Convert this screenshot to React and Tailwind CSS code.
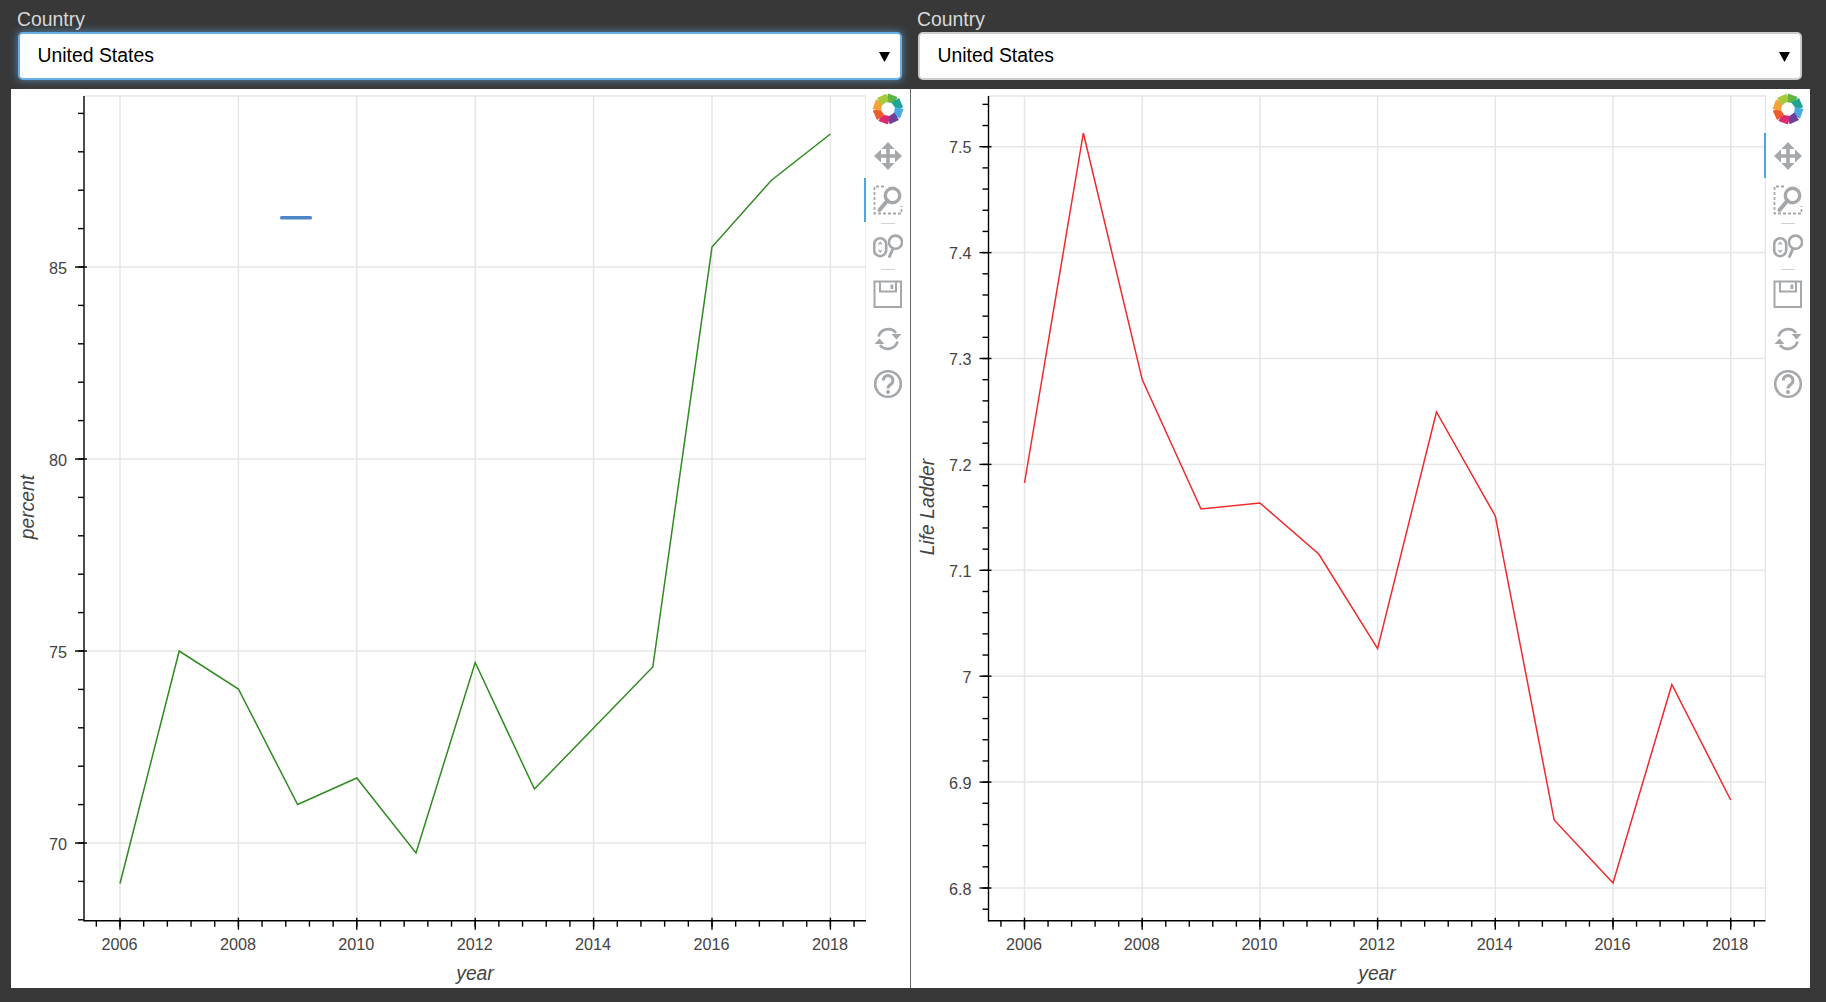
const LOGO_COLORS = ["#5cb545", "#1fa593", "#49a9e0", "#6f3f9c", "#d92a72", "#ee5b2e", "#f5a23a", "#a9c93c"];

const percentSeries = [883.5, 651, 689, 804.5, 778, 853, 662.5, 789, 728, 667, 247, 180.5, 134];
const ladderSeries = [483, 133, 379.6, 509, 503, 554, 648.6, 412, 516, 820, 883, 684.5, 800];

const range = (start, step, stop) => {
  const out = [];
  for (let v = start; step > 0 ? v <= stop : v >= stop; v += step) out.push(v);
  return out;
};

const percentChart = {
  left: 11,
  width: 855,
  axisX: 84,
  rightX: 866,
  year0: 120,
  yearStep: 59.2,
  line: percentSeries,
  color: "#2f8a20",
  label: "percent",
  labelX: 34,
  yTicks: [
    { y: 267, text: "85" },
    { y: 459, text: "80" },
    { y: 651, text: "75" },
    { y: 843, text: "70" },
  ],
  yMinor: range(843 + 76.8, -38.4, 96),
};

const ladderChart = {
  left: 911,
  width: 855,
  axisX: 988.5,
  rightX: 1765.5,
  year0: 1024.5,
  yearStep: 58.85,
  line: ladderSeries,
  color: "#ee2a2a",
  label: "Life Ladder",
  labelX: 934,
  yTicks: [
    { y: 146.7, text: "7.5" },
    { y: 252.6, text: "7.4" },
    { y: 358.5, text: "7.3" },
    { y: 464.4, text: "7.2" },
    { y: 570.3, text: "7.1" },
    { y: 676.2, text: "7" },
    { y: 782.1, text: "6.9" },
    { y: 888, text: "6.8" },
  ],
  yMinor: range(909.2, -21.18, 96),
};

const Chart = ({ config, children }) => {
  const { left, width, axisX, rightX, year0, yearStep, line, color, label, labelX, yTicks, yMinor } = config;
  const top = 89;
  const frameTop = 96;
  const bottom = 920.7;
  const yearX = (i) => year0 + i * yearStep;
  const points = line.map((y, i) => `${yearX(i)},${y}`).join(" ");
  const majorYears = [0, 2, 4, 6, 8, 10, 12];
  const minorX = range(-0.4, 0.4, 12.45).map(yearX);

  return (
    <svg
      width={width}
      height={899}
      viewBox={`${left} ${top} ${width} 899`}
      className="block shrink-0 font-['Liberation_Sans',sans-serif]"
    >
      {/* grid and outline */}
      <g stroke="#e6e6e6" strokeWidth="1.5" fill="none">
        {yTicks.map((t) => (
          <line key={t.text} x1={axisX} x2={rightX} y1={t.y} y2={t.y} />
        ))}
        {majorYears.map((i) => (
          <line key={i} x1={yearX(i)} x2={yearX(i)} y1={frameTop} y2={bottom} />
        ))}
        <path d={`M${axisX} ${frameTop} H${rightX} V${bottom}`} />
      </g>

      <polyline points={points} fill="none" stroke={color} strokeWidth="1.5" />
      {children}

      {/* axes */}
      <g stroke="#000" strokeWidth="1.4">
        <line x1={axisX} x2={axisX} y1={frameTop} y2={bottom + 0.7} />
        <line x1={axisX} x2={rightX} y1={bottom} y2={bottom} />
        {yTicks.map((t) => (
          <line key={t.text} x1={axisX - 9} x2={axisX + 3} y1={t.y} y2={t.y} />
        ))}
        {yMinor.map((y) => (
          <line key={y} x1={axisX - 6} x2={axisX} y1={y} y2={y} />
        ))}
        {majorYears.map((i) => (
          <line key={i} x1={yearX(i)} x2={yearX(i)} y1={bottom - 3} y2={bottom + 9} />
        ))}
        {minorX.map((x) => (
          <line key={x} x1={x} x2={x} y1={bottom} y2={bottom + 6} />
        ))}
      </g>

      {/* labels */}
      <g fill="#444444" fontSize="16.2">
        {yTicks.map((t) => (
          <text key={t.text} x={axisX - 17} y={t.y + 6.5} textAnchor="end">
            {t.text}
          </text>
        ))}
        {majorYears.map((i) => (
          <text key={i} x={yearX(i) - 0.5} y={950} textAnchor="middle">
            {2006 + i}
          </text>
        ))}
      </g>
      <g fill="#444444" fontSize="19.3" fontStyle="italic">
        <text x={(axisX + rightX) / 2} y={980} textAnchor="middle">
          year
        </text>
        <text
          x={labelX}
          y={507}
          textAnchor="middle"
          transform={`rotate(-90 ${labelX} 507)`}
        >
          {label}
        </text>
      </g>
    </svg>
  );
};

const Icon = ({ children }) => (
  <svg width="30" height="30" viewBox="0 0 30 30" className="block" fill="none" stroke="#a5a8ab">
    {children}
  </svg>
);

const LogoIcon = () => (
  <svg width="32" height="32" viewBox="0 0 32 32" className="block">
    {LOGO_COLORS.map((c, i) => (
      <path
        key={c}
        d="M16 0.5 L25.5 4 L22.5 10.5 L14 9 Z"
        fill={c}
        transform={`rotate(${i * 45} 16 16)`}
      />
    ))}
  </svg>
);

const MoveIcon = () => (
  <Icon>
    <path d="M15 6V24M6 15H24" strokeWidth="3.6" />
    <path d="M15 1L21.5 8H8.5ZM15 29L8.5 22H21.5ZM1 15L8 8.5V21.5ZM29 15L22 21.5V8.5Z" fill="#a5a8ab" stroke="none" />
  </Icon>
);

const BoxZoomIcon = () => (
  <Icon>
    <path d="M11 1.5H1.5V28.5H28.5V21" strokeWidth="1.8" strokeDasharray="3 2" />
    <circle cx="19.5" cy="10.5" r="7.2" strokeWidth="3.4" />
    <path d="M14.5 15.5L6.5 25" strokeWidth="4" strokeLinecap="round" />
  </Icon>
);

const WheelZoomIcon = () => (
  <Icon>
    <rect x="1.2" y="7.2" width="12" height="18" rx="6" strokeWidth="2.6" />
    <path d="M5.5 13.5L7.2 11.5L8.9 13.5M5.5 19L7.2 21L8.9 19" strokeWidth="1.2" />
    <circle cx="22.5" cy="11.2" r="6.6" strokeWidth="2.6" />
    <path d="M20 17.5L16.5 25.5" strokeWidth="3" strokeLinecap="round" />
  </Icon>
);

const SaveIcon = () => (
  <Icon>
    <rect x="1.5" y="2.5" width="26.5" height="25.5" strokeWidth="2" />
    <path d="M7 2.5V12.5H23V2.5" strokeWidth="2" />
    <rect x="17.5" y="5.5" width="2.8" height="4.5" fill="#a5a8ab" stroke="none" />
  </Icon>
);

const ResetIcon = () => (
  <Icon>
    <path d="M5.5 12.5A10 10 0 0 1 23 9" strokeWidth="2.8" />
    <path d="M24.5 17.5A10 10 0 0 1 7 21" strokeWidth="2.8" />
    <path d="M28.5 10L23.5 15.5L18.5 10ZM1.5 20L6.5 14.5L11.5 20Z" fill="#a5a8ab" stroke="none" />
  </Icon>
);

const HelpIcon = () => (
  <Icon>
    <circle cx="15" cy="15" r="12.8" strokeWidth="2.6" />
    <path d="M10.3 11.5A4.8 4.8 0 1 1 17.8 15.4C16 16.5 15 17.3 15 19.5" strokeWidth="3" />
    <circle cx="15" cy="23" r="2" fill="#a5a8ab" stroke="none" />
  </Icon>
);

const Tool = ({ active, className = "h-[45px]", children }) => (
  <div className={`relative flex items-center justify-center ${className}`}>
    {active && <div className="absolute left-[-2px] top-0 h-full w-[2px] bg-[#4ba6e0]" />}
    {children}
  </div>
);

const Separator = () => <div className="mx-auto my-px h-[1.5px] w-[14px] bg-[#cfd0d1]" />;

const Toolbar = ({ activeTool }) => (
  <div className="flex w-[44px] shrink-0 flex-col">
    <div className="flex h-[44px] items-start justify-center pr-[1px] pt-[4px]">
      <LogoIcon />
    </div>
    <Tool active={activeTool === "move"}>
      <MoveIcon />
    </Tool>
    <Tool active={activeTool === "box"} className="h-[43.5px]">
      <BoxZoomIcon />
    </Tool>
    <Separator />
    <Tool className="h-[42.5px]">
      <WheelZoomIcon />
    </Tool>
    <Separator />
    <Tool>
      <SaveIcon />
    </Tool>
    <Tool>
      <ResetIcon />
    </Tool>
    <Tool>
      <HelpIcon />
    </Tool>
  </div>
);

const CountrySelect = ({ focused, className }) => (
  <div className={className}>
    <label className="block text-[19.4px] leading-[22px] text-[#d9d9d9]">Country</label>
    <div className="relative ml-px mt-[2px]">
      <select
        defaultValue="United States"
        className={
          focused
            ? "block h-[48px] w-full appearance-none rounded-[5px] border-2 border-[#66afe9] bg-white pl-[17.5px] text-[19.4px] text-black shadow-[0_0_8px_rgba(102,175,233,0.7)] outline-none"
            : "block h-[48px] w-full appearance-none rounded-[5px] border-2 border-[#cccccc] bg-white pl-[17.5px] text-[19.4px] text-black outline-none"
        }
      >
        <option>United States</option>
      </select>
      <svg width="11" height="10" viewBox="0 0 11 10" className="absolute right-[12px] top-[20px]">
        <path d="M0 0H11L5.5 10Z" fill="#000" />
      </svg>
    </div>
  </div>
);

export default function App() {
  return (
    <div className="h-[1002px] w-[1826px] overflow-hidden bg-[#383838] font-['Liberation_Sans',sans-serif]">
      <div className="flex pl-[17px] pt-[8px]">
        <CountrySelect focused className="mr-[15.5px] w-[884.5px]" />
        <CountrySelect className="w-[884.5px]" />
      </div>

      <div className="ml-[11px] mt-[9px] flex h-[899px] w-[1799px] bg-white">
        <div className="flex w-[900px] shrink-0 border-r border-r-[#666666]">
          <Chart config={percentChart}>
            <rect x="280" y="216" width="32" height="3.6" rx="1.5" fill="#4f86c6" />
          </Chart>
          <Toolbar activeTool="box" />
        </div>
        <div className="flex">
          <Chart config={ladderChart} />
          <Toolbar activeTool="move" />
        </div>
      </div>
    </div>
  );
}
